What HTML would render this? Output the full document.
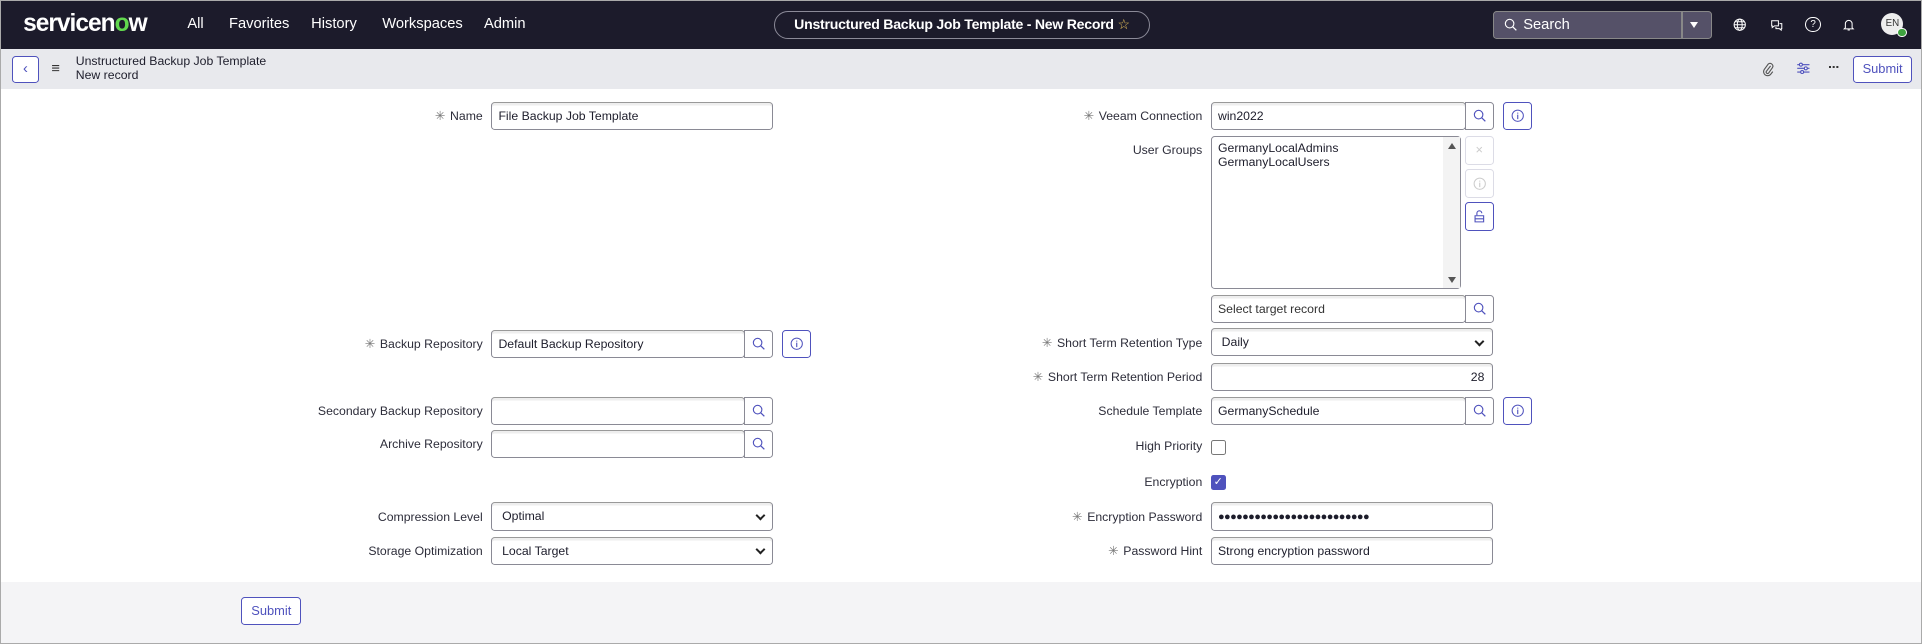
<!DOCTYPE html>
<html><head><meta charset="utf-8"><style>
html,body{margin:0;padding:0;background:#fff;overflow:hidden}
#w{zoom:1.2258;position:relative;width:1568px;height:525px;font-family:"Liberation Sans",sans-serif;font-size:10.5px;color:#1d1d2b;box-sizing:border-box;border:1px solid #aaa;overflow:hidden}
.a{position:absolute}
.nav{left:0;top:0;width:1568px;height:39px;background:#1c1b2b;color:#fff}
.nav span.l{position:absolute;top:12px;font-size:12px}
.sub{left:0;top:39px;width:1568px;height:33px;background:#e8e9ed}
.bot{left:0;top:474px;width:1568px;height:51px;background:#f4f4f6}
.btn{border:1px solid #4f52bd;border-radius:3px;background:#fff;color:#4f52bd;box-sizing:border-box;text-align:center}
.lab{text-align:right;width:300px;font-size:10px;color:#2d2d3a}
.lab b{font-weight:normal;color:#777;margin-right:4px}
.in{border:1px solid #8a8a95;border-radius:3px;background:#fff;box-sizing:border-box;height:23px;padding:5px 0 0 5px;font-size:10px;border-top-color:#999;box-shadow:inset 0 2px 0 #eee}
.sb{border:1px solid #8a8a95;border-radius:0 3px 3px 0;box-sizing:border-box;height:23px;width:24px;background:#fff}
.sb svg{position:absolute;left:6px;top:5px}
.sel::after{content:"";position:absolute;right:7px;top:7px;width:4px;height:4px;border-right:2px solid #222;border-bottom:2px solid #222;transform:rotate(45deg)}
</style></head><body><div id="w">
<svg width="0" height="0" style="position:absolute"><defs><symbol id="mg" viewBox="0 0 12 12"><circle cx="5" cy="5" r="3.8" fill="none" stroke="currentColor" stroke-width="1"/><path d="M7.8 7.8L11 11" stroke="currentColor" stroke-width="1.1"/></symbol><symbol id="inf" viewBox="0 0 12 12"><circle cx="6" cy="6" r="5" fill="none" stroke="currentColor" stroke-width="0.9"/><path d="M6 5v4M6 3.2v0.9" stroke="currentColor" stroke-width="1"/></symbol></defs></svg>
<div class="a nav">
 <div class="a" style="left:18px;top:7px;font-size:20px;font-weight:bold;letter-spacing:-0.8px">servicen<span style="color:#62d84e">o</span>w</div>
 <span class="l" style="left:152px">All</span><span class="l" style="left:186px">Favorites</span><span class="l" style="left:253px">History</span><span class="l" style="left:311px">Workspaces</span><span class="l" style="left:394px">Admin</span>
 <div class="a" style="left:631px;top:8px;width:306px;height:23px;border:1px solid #8b8a98;border-radius:12px;box-sizing:border-box;text-align:center;font-weight:bold;font-size:11.5px;line-height:21px;letter-spacing:-0.2px">Unstructured Backup Job Template - New Record <span style="color:#e8c25a;font-weight:normal">☆</span></div>
 <div class="a" style="left:1217px;top:8px;width:179px;height:23px;background:#555168;border:1px solid #888;border-radius:3px;box-sizing:border-box"><svg class="a" style="left:8px;top:5px;color:#fff" width="11" height="11"><use href="#mg"/></svg><span class="a" style="left:24px;top:4px;font-size:12px">Search</span><div class="a" style="left:153px;top:0;width:1px;height:21px;background:#888"></div><div class="a" style="left:160px;top:8px;border:4px solid transparent;border-top:5px solid #fff"></div></div>
 <svg class="a" style="left:1413px;top:14px" width="11" height="11" viewBox="0 0 12 12"><g fill="none" stroke="#fff" stroke-width="0.9"><circle cx="6" cy="6" r="5"/><ellipse cx="6" cy="6" rx="2.2" ry="5"/><path d="M1 6h10M2 3.3h8M2 8.7h8"/></g></svg>
 <svg class="a" style="left:1443px;top:14px" width="11" height="11" viewBox="0 0 12 12"><g fill="none" stroke="#fff" stroke-width="0.9"><path d="M1.5 2.5h6v4.5h-3.5l-2 1.5v-1.5h-0.5z"/><path d="M8.5 5h2v4.5h-0.5v1.3l-1.7-1.3h-3v-1.5"/></g></svg>
 <div class="a" style="left:1472px;top:13px;width:11px;height:11px;border:1px solid #fff;border-radius:50%;font-size:8px;text-align:center;line-height:11px">?</div>
 <svg class="a" style="left:1502px;top:13px" width="11" height="12" viewBox="0 0 12 12"><path d="M3 9V5.5a3 3 0 0 1 6 0V9l1 1H2zM5 11h2" fill="none" stroke="#fff" stroke-width="0.9"/></svg>
 <div class="a" style="left:1534px;top:10px;width:18px;height:18px;border-radius:50%;background:#eee;color:#333;font-size:8px;text-align:center;line-height:18px">EN</div>
 <div class="a" style="left:1547px;top:22px;width:6px;height:6px;border-radius:50%;background:#3fa33f;border:1px solid #fff"></div>
</div>
<div class="a sub">
 <div class="a btn" style="left:9px;top:6px;width:22px;height:22px;line-height:20px;font-size:12px">‹</div>
 <div class="a" style="left:41px;top:10px;font-size:12px;color:#333">≡</div>
 <div class="a" style="left:61px;top:4px;font-size:10px;line-height:11.5px">Unstructured Backup Job Template<br>New record</div>
 <svg class="a" style="left:1437px;top:10px" width="10" height="13" viewBox="0 0 10 13"><path d="M7 4L3.5 8.5a1.2 1.2 0 0 0 1.8 1.5L8.5 5.5a2.3 2.3 0 0 0-3.4-3L1.8 7a3.3 3.3 0 0 0 5 4.2l2-2.5" fill="none" stroke="#555" stroke-width="0.9"/></svg>
 <svg class="a" style="left:1464px;top:10px" width="12" height="12" viewBox="0 0 12 12"><g stroke="#4f52bd" stroke-width="0.9" fill="none"><path d="M1 3h10M1 6h10M1 9h10"/><circle cx="4" cy="3" r="1.2" fill="#fff"/><circle cx="8" cy="6" r="1.2" fill="#fff"/><circle cx="5" cy="9" r="1.2" fill="#fff"/></g></svg>
 <div class="a" style="left:1491px;top:14px;width:2px;height:2px;background:#333;box-shadow:3px 0 #333,6px 0 #333"></div>
 <div class="a btn" style="left:1511px;top:6px;width:48px;height:22px;line-height:20px;font-size:10.5px">Submit</div>
</div>
<div class="a bot"><div class="a btn" style="left:196px;top:12px;width:49px;height:23px;line-height:21px">Submit</div></div>

<!-- left column -->
<div class="a lab" style="left:93px;top:88px"><b>✳</b>Name</div>
<div class="a in" style="left:400px;top:82px;width:230px">File Backup Job Template</div>
<div class="a lab" style="left:93px;top:274px"><b>✳</b>Backup Repository</div>
<div class="a in" style="left:400px;top:268px;width:207px">Default Backup Repository</div>
<div class="a sb" style="left:606px;top:268px"><svg width="11" height="11" style="color:#4f52bd"><use href="#mg"/></svg></div>
<div class="a btn" style="left:637px;top:268px;width:24px;height:23px"><svg width="11" height="11" style="margin-top:5px"><use href="#inf"/></svg></div>
<div class="a lab" style="left:93px;top:329px">Secondary Backup Repository</div>
<div class="a in" style="left:400px;top:323px;width:207px"></div>
<div class="a sb" style="left:606px;top:323px"><svg width="11" height="11" style="color:#4f52bd"><use href="#mg"/></svg></div>
<div class="a lab" style="left:93px;top:356px">Archive Repository</div>
<div class="a in" style="left:400px;top:350px;width:207px"></div>
<div class="a sb" style="left:606px;top:350px"><svg width="11" height="11" style="color:#4f52bd"><use href="#mg"/></svg></div>
<div class="a lab" style="left:93px;top:415px">Compression Level</div>
<div class="a in sel" style="left:400px;top:409px;width:230px;padding-left:8px">Optimal</div>
<div class="a lab" style="left:93px;top:443px">Storage Optimization</div>
<div class="a in sel" style="left:400px;top:437px;width:230px;padding-left:8px">Local Target</div>

<!-- right column -->
<div class="a lab" style="left:680px;top:88px"><b>✳</b>Veeam Connection</div>
<div class="a in" style="left:987px;top:82px;width:208px">win2022</div>
<div class="a sb" style="left:1194px;top:82px"><svg width="11" height="11" style="color:#4f52bd"><use href="#mg"/></svg></div>
<div class="a btn" style="left:1225px;top:82px;width:24px;height:23px"><svg width="11" height="11" style="margin-top:5px"><use href="#inf"/></svg></div>
<div class="a lab" style="left:680px;top:116px">User Groups</div>
<div class="a" style="left:987px;top:110px;width:204px;height:125px;border:1px solid #8a8a95;border-radius:3px;box-sizing:border-box;padding:3px 5px;line-height:12px;font-size:10px">GermanyLocalAdmins<br>GermanyLocalUsers
 <div class="a" style="right:0;top:0;width:14px;height:123px;background:#f3f3f3"></div>
 <div class="a" style="right:3px;top:5px;border:4px solid transparent;border-bottom:5px solid #555;border-top:0"></div>
 <div class="a" style="right:3px;bottom:4px;border:4px solid transparent;border-top:5px solid #555;border-bottom:0"></div>
</div>
<div class="a" style="left:1194px;top:110px;width:24px;height:24px;border:1px solid #dcdce6;border-radius:3px;box-sizing:border-box;color:#ccc;text-align:center;line-height:22px">×</div>
<div class="a" style="left:1194px;top:137px;width:24px;height:24px;border:1px solid #dcdce6;border-radius:3px;box-sizing:border-box;color:#ccc;text-align:center"><svg width="11" height="11" style="margin-top:6px"><use href="#inf"/></svg></div>
<div class="a btn" style="left:1194px;top:164px;width:24px;height:24px"><svg width="12" height="12" viewBox="0 0 12 12" style="margin-top:5px"><path d="M4 5V3.5a2 2 0 0 1 4 0M2.5 5.5h7v5h-7zM2.5 8h7" fill="none" stroke="#4f52bd" stroke-width="0.9"/></svg></div>
<div class="a in" style="left:987px;top:240px;width:208px;color:#333">Select target record</div>
<div class="a sb" style="left:1194px;top:240px"><svg width="11" height="11" style="color:#4f52bd"><use href="#mg"/></svg></div>
<div class="a lab" style="left:680px;top:273px"><b>✳</b>Short Term Retention Type</div>
<div class="a in sel" style="left:987px;top:267px;width:230px;padding-left:8px">Daily</div>
<div class="a lab" style="left:680px;top:301px"><b>✳</b>Short Term Retention Period</div>
<div class="a in" style="left:987px;top:295px;width:230px;text-align:right;padding-right:6px">28</div>
<div class="a lab" style="left:680px;top:329px">Schedule Template</div>
<div class="a in" style="left:987px;top:323px;width:208px">GermanySchedule</div>
<div class="a sb" style="left:1194px;top:323px"><svg width="11" height="11" style="color:#4f52bd"><use href="#mg"/></svg></div>
<div class="a btn" style="left:1225px;top:323px;width:24px;height:23px"><svg width="11" height="11" style="margin-top:5px"><use href="#inf"/></svg></div>
<div class="a lab" style="left:680px;top:357px">High Priority</div>
<div class="a" style="left:987px;top:358px;width:12px;height:12px;border:1px solid #777;border-radius:2px;box-sizing:border-box"></div>
<div class="a lab" style="left:680px;top:387px">Encryption</div>
<div class="a" style="left:987px;top:387px;width:12px;height:12px;background:#4f52bd;border-radius:2px;color:#fff;font-size:9px;text-align:center;line-height:12px">✓</div>
<div class="a lab" style="left:680px;top:415px"><b>✳</b>Encryption Password</div>
<div class="a in" style="left:987px;top:409px;width:230px;font-size:9px;letter-spacing:-0.5px;padding-top:6px">●●●●●●●●●●●●●●●●●●●●●●●●●</div>
<div class="a lab" style="left:680px;top:443px"><b>✳</b>Password Hint</div>
<div class="a in" style="left:987px;top:437px;width:230px">Strong encryption password</div>
</div></body></html>
